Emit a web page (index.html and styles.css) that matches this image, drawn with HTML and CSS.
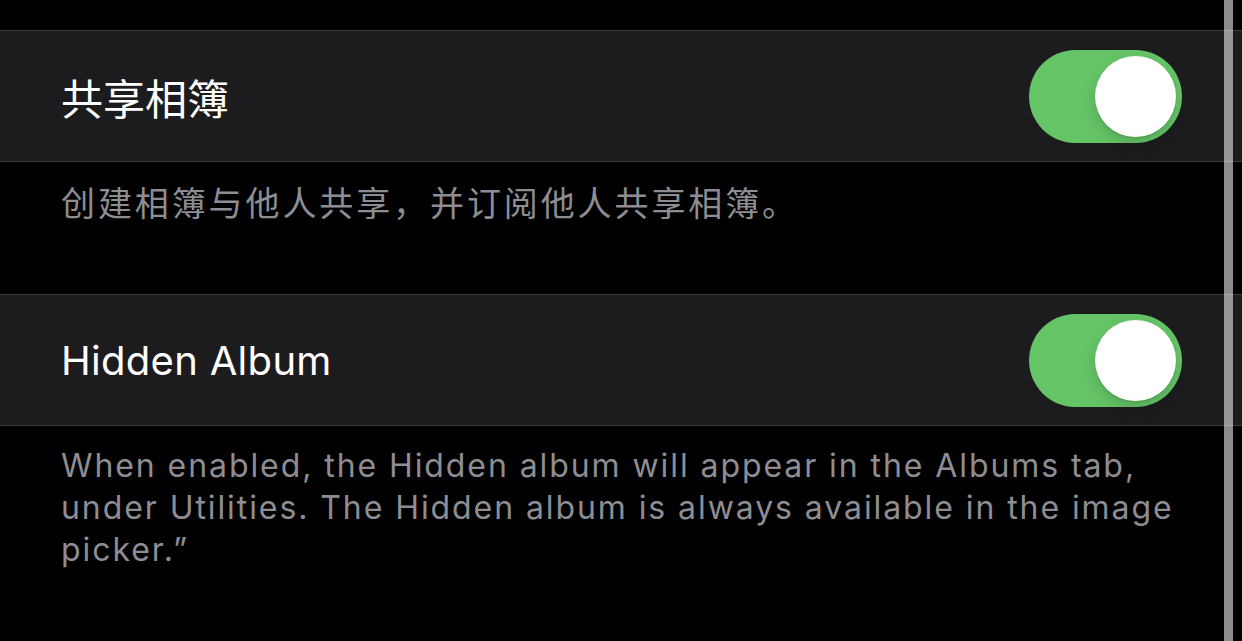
FILE: index.html
```html
<!DOCTYPE html>
<html lang="zh">
<head>
<meta charset="utf-8">
<title>Settings</title>
<link rel="stylesheet" href="styles.css">
</head>
<body>
<div class="screen">
  <div class="top-gap"></div>
  <div class="group">
    <div class="row">
      <span class="row-title cjk-title">共享相簿</span>
      <div class="switch on"><div class="knob"></div></div>
    </div>
  </div>
  <div class="footer footer-cjk">
    <p>创建相簿与他人共享，并订阅他人共享相簿。</p>
  </div>
  <div class="group">
    <div class="row">
      <span class="row-title">Hidden Album</span>
      <div class="switch on"><div class="knob"></div></div>
    </div>
  </div>
  <div class="footer footer-en">
    <p>When enabled, the Hidden album will appear in the Albums tab, under Utilities. The Hidden album is always available in the image picker.”</p>
  </div>
  <div class="scroll-indicator"></div>
</div>
</body>
</html>
```
FILE: styles.css
```css
html, body {
  margin: 0;
  padding: 0;
  background: #000;
}
body {
  font-family: "Inter", "Noto Sans CJK SC", sans-serif;
  color: #fff;
  overflow: hidden;
}
.screen {
  position: relative;
  width: 1242px;
  height: 641px;
  overflow: hidden;
}
.top-gap {
  height: 30px;
}
.group {
  background: #1c1c1e;
  border-top: 1px solid #3a3a3d;
  border-bottom: 1px solid #3a3a3d;
}
.row {
  height: 130px;
  display: flex;
  align-items: center;
  justify-content: space-between;
  padding: 0 60px 0 61px;
}
.row-title {
  font-size: 40px;
  letter-spacing: 0.3px;
}
.cjk-title {
  font-family: "Noto Sans CJK SC", sans-serif;
  font-size: 42px;
  letter-spacing: 0;
}
.switch {
  width: 153px;
  height: 93px;
  border-radius: 47px;
  background: #65c466;
  display: flex;
  align-items: center;
  justify-content: flex-end;
  padding: 0 6px;
  box-sizing: border-box;
}
.knob {
  width: 81px;
  height: 81px;
  border-radius: 50%;
  background: #fff;
  box-shadow: 0 6px 14px rgba(0, 0, 0, 0.15), 0 2px 2px rgba(0, 0, 0, 0.06);
}
.footer p {
  margin: 0;
  color: #8d8d93;
}
.footer-cjk {
  height: 132px;
  box-sizing: border-box;
  padding: 18px 30px 0 61px;
}
.footer-cjk p {
  font-family: "Noto Sans CJK SC", sans-serif;
  font-size: 34px;
  line-height: 44px;
  letter-spacing: 2.9px;
}
.footer-en {
  padding: 19px 60px 0 61px;
}
.footer-en p {
  font-size: 32px;
  line-height: 42px;
  letter-spacing: 1.92px;
}
.scroll-indicator {
  position: absolute;
  top: 0;
  bottom: 0;
  left: 1224px;
  width: 9px;
  background: rgba(255, 255, 255, 0.55);
}
```
